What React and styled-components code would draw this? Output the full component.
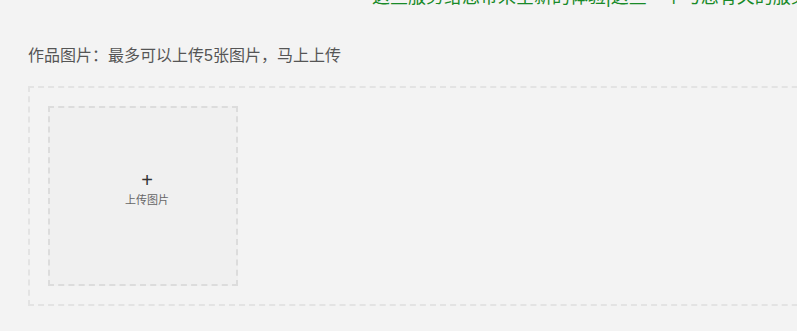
import React from "react";
import styled, { createGlobalStyle } from "styled-components";

const GlobalStyle = createGlobalStyle`
  html, body {
    margin: 0;
    padding: 0;
    background: #f3f3f3;
    font-family: "Liberation Sans", "Noto Sans CJK SC", sans-serif;
    overflow: hidden;
  }
`;

function App() {
  return (
    <Page>
      <GlobalStyle />
      <Banner>
        <BannerText>这些服务给您带来全新的体验|这些一个与您有关的服务，了解一下</BannerText>
      </Banner>
      <Section>
        <Label>作品图片：最多可以上传5张图片，马上上传</Label>
        <DropZone>
          <UploadCard>
            <Plus>+</Plus>
            <UploadText>上传图片</UploadText>
          </UploadCard>
        </DropZone>
      </Section>
    </Page>
  );
}

export default App;

const Page = styled.div`
  width: 797px;
  height: 331px;
  background: #f3f3f3;
  overflow: hidden;
`;

const Banner = styled.div`
  height: 8px;
  overflow: hidden;
  padding-left: 372px;
`;

const BannerText = styled.div`
  margin-top: -13px;
  font-size: 18px;
  line-height: 20px;
  color: #188a28;
  white-space: nowrap;
`;

const Section = styled.div`
  padding: 37px 0 0 28px;
`;

const Label = styled.div`
  font-size: 16px;
  line-height: 22px;
  color: #555;
  height: 22px;
  margin-bottom: 19px;
  white-space: nowrap;
`;

const DropZone = styled.div`
  box-sizing: border-box;
  width: 820px;
  height: 220px;
  border: 2px dashed #e3e3e3;
  padding: 18px;
`;

const UploadCard = styled.div`
  box-sizing: border-box;
  width: 190px;
  height: 180px;
  background: #f0f0f0;
  border: 2px dashed #dcdcdc;
  display: flex;
  flex-direction: column;
  align-items: center;
  justify-content: center;
  padding: 0 0 14px 8px;
`;

const Plus = styled.div`
  font-size: 20px;
  line-height: 18px;
  font-weight: 300;
  color: #333;
`;

const UploadText = styled.div`
  margin-top: 4px;
  font-size: 11px;
  line-height: 14px;
  color: #666;
`;
